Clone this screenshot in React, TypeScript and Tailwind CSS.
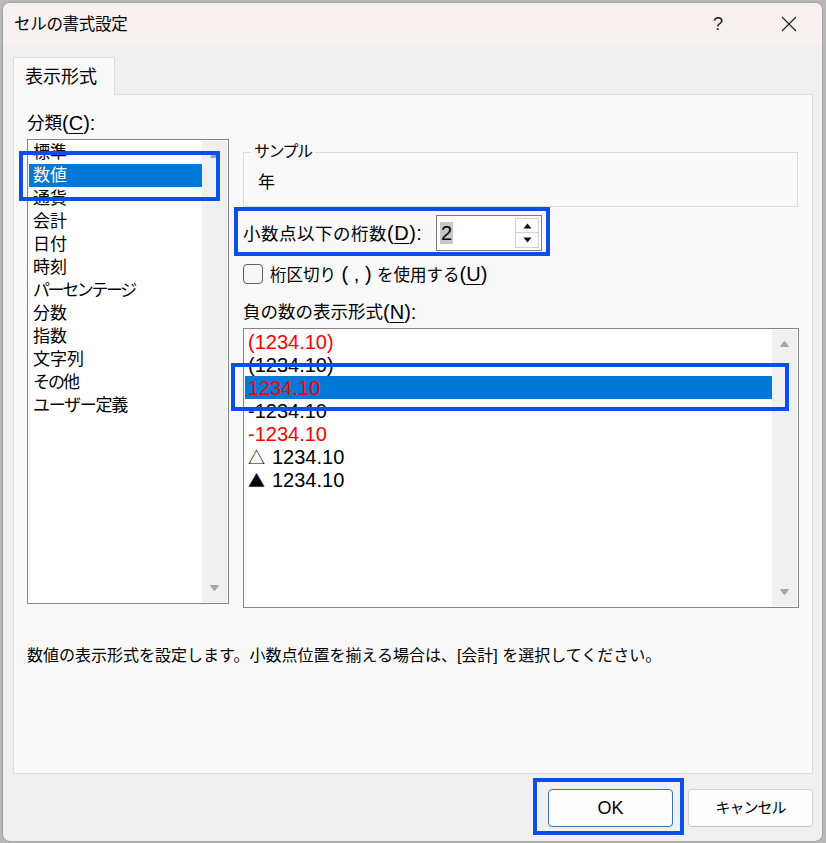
import React from "react";

// latin runs in the dialog render wider than the CJK text, so they get their own size
const L = ({ children }: { children: React.ReactNode }) => (
  <span className="text-[20px]">{children}</span>
);

const U = ({ children }: { children: React.ReactNode }) => (
  <span className="underline underline-offset-[3px] decoration-1">{children}</span>
);

function ScrollArrow({ down }: { down?: boolean }) {
  return (
    <svg width="11" height="8" viewBox="0 0 11 8">
      <path
        d={down ? "M1.5 1.5h8L5.5 6.8z" : "M1.5 6.5h8L5.5 1.2z"}
        fill="#a6a6a6"
        stroke="#a6a6a6"
        strokeLinejoin="round"
      />
    </svg>
  );
}

function Scrollbar() {
  return (
    <div className="w-[25px] shrink-0 bg-[#f0f0f0] flex flex-col items-center justify-between py-[10px]">
      <ScrollArrow />
      <ScrollArrow down />
    </div>
  );
}

const categories = [
  { label: "標準" },
  { label: "数値", selected: true },
  { label: "通貨" },
  { label: "会計" },
  { label: "日付" },
  { label: "時刻" },
  { label: "パーセンテージ", cls: "tracking-[-2.4px]" },
  { label: "分数" },
  { label: "指数" },
  { label: "文字列" },
  { label: "その他", cls: "tracking-[-2px]" },
  { label: "ユーザー定義", cls: "tracking-[-1.3px]" },
];

const negatives = [
  { text: "(1234.10)", red: true },
  { text: "(1234.10)" },
  { text: "1234.10", red: true, selected: true },
  { text: "-1234.10" },
  { text: "-1234.10", red: true },
  { mark: "△", text: "1234.10" },
  { mark: "▲", text: "1234.10" },
];

function Annotation({ cls }: { cls: string }) {
  return <div className={`absolute border-[4px] border-[#0a50e6] pointer-events-none ${cls}`} />;
}

export default function App() {
  return (
    <div className="relative w-[826px] h-[843px] overflow-hidden bg-[#b8b8b8] pt-[2px] pl-[2px] font-['Liberation_Sans','Noto_Sans_CJK_JP',sans-serif] text-black">
      <div className="w-[821px] h-[840px] rounded-[8px] border border-[#a3a3a3] bg-[#f0f0f0] overflow-hidden flex flex-col">
        {/* title bar */}
        <div className="h-[42px] shrink-0 bg-[#f9f1f0] flex items-center pl-[11px] pr-[10px]">
          <span className="text-[16.5px] tracking-[-0.3px]">セルの書式設定</span>
          <div className="ml-auto flex items-center gap-[25px]">
            <div className="w-[46px] h-[30px] flex items-center justify-center text-[18px] text-[#1c1c1c]">?</div>
            <div className="w-[46px] h-[30px] flex items-center justify-center">
              <svg width="16" height="16" viewBox="0 0 16 16">
                <path d="M1 1L15 15M15 1L1 15" stroke="#1c1c1c" strokeWidth="1.1" />
              </svg>
            </div>
          </div>
        </div>

        <div className="flex-1 flex flex-col px-[10px] pt-[12px]">
          {/* tab */}
          <div className="relative z-10 -mb-px w-[102px] h-[38px] border border-b-0 border-[#dcdcdc] bg-[#f9f9f9] flex items-center pl-[11px] pt-[2px] text-[18px]">
            表示形式
          </div>

          {/* tab panel */}
          <div className="w-[800px] h-[680px] shrink-0 border border-[#dcdcdc] bg-[#f9f9f9] pl-[13px] pt-[18px] flex flex-col">
            <div className="flex items-start gap-[14px]">
              {/* categories */}
              <div className="w-[202px] flex flex-col">
                <div className="h-[20px] flex items-center text-[17.5px] leading-[20px]">
                  分類<L>(<U>C</U>):</L>
                </div>
                <div className="mt-[6px] h-[465px] border border-[#858585] bg-white p-[1px] flex">
                  <div className="flex-1 flex flex-col">
                    {categories.map((c) => (
                      <div
                        key={c.label}
                        className={`h-[23px] flex items-center pl-[4px] text-[17px] ${c.cls ?? ""} ${
                          c.selected ? "bg-[#0078d7] text-white" : ""
                        }`}
                      >
                        {c.label}
                      </div>
                    ))}
                  </div>
                  <Scrollbar />
                </div>
              </div>

              {/* right side */}
              <div className="w-[556px] flex flex-col pt-[29px]">
                <fieldset className="w-[555px] border border-[#dcdcdc]">
                  <legend className="ml-[7px] px-[3px] h-[20px] leading-[20px] text-[16px] tracking-[-1.5px]">
                    サンプル
                  </legend>
                  <div className="h-[44px] flex items-center pl-[14px] pb-[2px] text-[17px]">年</div>
                </fieldset>

                <div className="mt-[8px] h-[36px] flex items-center">
                  <div className="w-[193px] text-[17.5px] tracking-[0.5px] leading-[20px]">
                    小数点以下の桁数<L>(<U>D</U>):</L>
                  </div>
                  <div className="w-[106px] h-[36px] border border-[#7a7a7a] bg-white flex items-center pl-[3px] pr-[2px]">
                    <span className="text-[20px] leading-[22px] bg-[#c6c6c6] px-px">2</span>
                    <div className="ml-auto w-[24px] flex flex-col">
                      <div className="h-[15px] border border-[#d2d2d2] bg-[#fcfcfc] flex items-center justify-center">
                        <svg width="9" height="6" viewBox="0 0 9 6">
                          <path d="M0.5 5.5h8L4.5 0.5z" fill="#111" />
                        </svg>
                      </div>
                      <div className="h-[15px] border border-t-0 border-[#d2d2d2] bg-[#fcfcfc] flex items-center justify-center">
                        <svg width="9" height="6" viewBox="0 0 9 6">
                          <path d="M0.5 0.5h8L4.5 5.5z" fill="#111" />
                        </svg>
                      </div>
                    </div>
                  </div>
                </div>

                <div className="mt-[13px] h-[20px] flex items-center">
                  <div className="w-[20px] h-[20px] rounded-[4px] border border-[#5e5e5e] bg-[#f6f6f6]" />
                  <div className="ml-[7px] text-[16.5px] leading-[20px]">
                    桁区切り<L> ( , ) </L>を使用する<L>(<U>U</U>)</L>
                  </div>
                </div>

                <div className="mt-[18px] h-[20px] flex items-center text-[17.5px] leading-[20px]">
                  負の数の表示形式<L>(<U>N</U>):</L>
                </div>

                <div className="mt-[6px] h-[280px] border border-[#858585] bg-white p-[1px] flex">
                  <div className="flex-1 flex flex-col">
                    {negatives.map((n, i) => (
                      <div
                        key={i}
                        className={`h-[23px] flex items-center pl-[3px] text-[20px] ${
                          n.red ? "text-[#ff0000]" : ""
                        } ${n.selected ? "bg-[#0078d7]" : ""}`}
                      >
                        {n.mark && (
                          <span className="mr-[7px] text-[17px] font-['Noto_Sans_CJK_JP',sans-serif]">{n.mark}</span>
                        )}
                        <span>{n.text}</span>
                      </div>
                    ))}
                  </div>
                  <Scrollbar />
                </div>
              </div>
            </div>

            <div className="mt-[38px] h-[20px] flex items-center text-[16px] leading-[20px]">
              数値の表示形式を設定します。小数点位置を揃える場合は、[会計] を選択してください。
            </div>
          </div>

          {/* buttons */}
          <div className="mt-[15px] -mr-px flex justify-end gap-[15px]">
            <button className="w-[125px] h-[38px] rounded-[4px] border border-[#3d6fb4] bg-[#fdfdfd] text-[18px]">
              OK
            </button>
            <button className="w-[125px] h-[38px] rounded-[4px] border border-[#d3d3d3] border-b-[#c2c2c2] bg-[#fdfdfd] text-[15px] tracking-[-1px]">
              キャンセル
            </button>
          </div>
        </div>
      </div>

      <Annotation cls="left-[19px] top-[151px] w-[201px] h-[50px]" />
      <Annotation cls="left-[234px] top-[207px] w-[316px] h-[49px]" />
      <Annotation cls="left-[231px] top-[363px] w-[558px] h-[48px]" />
      <Annotation cls="left-[533px] top-[778px] w-[151px] h-[57px]" />
    </div>
  );
}
